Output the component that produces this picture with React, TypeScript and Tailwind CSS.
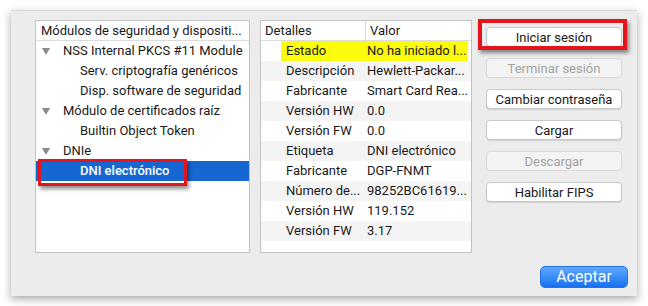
import React from "react";

const font = { fontFamily: "Roboto, 'Noto Sans', sans-serif" };

function Tri() {
  return (
    <svg width="8" height="7" viewBox="0 0 8 7" className="shrink-0">
      <polygon points="0,0 8,0 4,7" fill="#8a8a8a" />
    </svg>
  );
}

type TreeRow = { label: string; level: 0 | 1; selected?: boolean };
const tree: TreeRow[] = [
  { label: "NSS Internal PKCS #11 Module", level: 0 },
  { label: "Serv. criptografía genéricos", level: 1 },
  { label: "Disp. software de seguridad", level: 1 },
  { label: "Módulo de certificados raíz", level: 0 },
  { label: "Builtin Object Token", level: 1 },
  { label: "DNIe", level: 0 },
  { label: "DNI electrónico", level: 1, selected: true },
];

const details: [string, string][] = [
  ["Estado", "No ha iniciado l..."],
  ["Descripción", "Hewlett-Packar..."],
  ["Fabricante", "Smart Card Rea..."],
  ["Versión HW", "0.0"],
  ["Versión FW", "0.0"],
  ["Etiqueta", "DNI electrónico"],
  ["Fabricante", "DGP-FNMT"],
  ["Número de...", "98252BC61619..."],
  ["Versión HW", "119.152"],
  ["Versión FW", "3.17"],
];

function Btn({ label, disabled }: { label: string; disabled?: boolean }) {
  return (
    <div
      className={
        "h-[20px] w-[136px] rounded-[4px] border flex items-center justify-center text-[13px] leading-none whitespace-nowrap " +
        (disabled
          ? "bg-[#f3f3f3] border-[#d8d8d8] text-[#a3a3a3]"
          : "bg-white border-[#c8c8c8] text-[#1a1a1a] shadow-[0_1px_1px_rgba(0,0,0,0.12)]")
      }
    >
      {label}
    </div>
  );
}

export default function App() {
  return (
    <div className="w-[648px] h-[306px] bg-white pl-[11px] pt-[10px]" style={font}>
      <div className="relative w-[626px] h-[286px] bg-[#ececec] border-t border-[#dadada] shadow-[0_3px_8px_rgba(0,0,0,0.35)] flex flex-col">
        <div className="flex pl-[24px] pt-[9px]">
          {/* Left tree panel */}
          <div className="relative w-[215px] h-[233px] bg-white border border-[#c2c2c2] flex flex-col">
            <div className="h-[20px] shrink-0 border-b border-[#dcdcdc] flex items-center pl-[5px] text-[13px] text-[#1a1a1a] whitespace-nowrap">
              Módulos de seguridad y dispositi...
            </div>
            {tree.map((r, i) => (
              <div
                key={i}
                className={
                  "h-[20px] shrink-0 flex items-center text-[13px] whitespace-nowrap " +
                  (r.selected ? "bg-[#1767d3] text-white font-medium" : "text-[#1a1a1a]")
                }
              >
                {r.level === 0 ? (
                  <div className="flex items-center pl-[6px] gap-[13px]">
                    <Tri />
                    <span>{r.label}</span>
                  </div>
                ) : (
                  <span className="pl-[44px]">{r.label}</span>
                )}
              </div>
            ))}
            {/* red annotation */}
            <div className="absolute left-[2px] top-[138px] w-[149px] h-[27px] border-[3px] border-[#e3141b] shadow-[2px_3px_4px_rgba(0,0,0,0.45)]" />
          </div>

          {/* Details panel */}
          <div className="ml-[10px] w-[212px] h-[233px] bg-white border border-[#c2c2c2] flex flex-col overflow-hidden">
            <div className="h-[20px] shrink-0 border-b border-[#dcdcdc] flex items-center text-[13px] text-[#1a1a1a] whitespace-nowrap">
              <div className="w-[105px] pl-[4px] h-full flex items-center border-r border-[#dcdcdc]">Detalles</div>
              <div className="pl-[4px]">Valor</div>
            </div>
            {details.map(([k, v], i) => (
              <div
                key={i}
                className={
                  "h-[20px] shrink-0 flex items-center text-[13px] text-[#1a1a1a] whitespace-nowrap " +
                  (i % 2 === 1 ? "bg-[#f4f4f4]" : "bg-white")
                }
              >
                <div className="w-[20px] shrink-0 h-full" />
                <div
                  className={
                    "flex items-center h-full w-[187px] " + (i === 0 ? "bg-[#fbfb0d]" : "")
                  }
                >
                  <span className="w-[86px] pl-[5px] shrink-0">{k}</span>
                  <span>{v}</span>
                </div>
              </div>
            ))}
            <div className="flex-1 bg-white" />
          </div>

          {/* Buttons */}
          <div className="relative ml-[14px] pt-[7px] flex flex-col gap-[11px]">
            <Btn label="Iniciar sesión" />
            <Btn label="Terminar sesión" disabled />
            <Btn label="Cambiar contraseña" />
            <Btn label="Cargar" />
            <Btn label="Descargar" disabled />
            <Btn label="Habilitar FIPS" />
            <div className="absolute left-[-8px] top-[-1px] w-[149px] h-[31px] border-[4px] border-[#e3141b] shadow-[2px_3px_4px_rgba(0,0,0,0.45)]" />
          </div>
        </div>

        <div className="flex justify-end pr-[9px] mt-[13px]">
          <div className="w-[88px] h-[22px] rounded-[5px] bg-gradient-to-b from-[#5ea8fc] to-[#1670f3] border border-[#2474e8] text-white text-[16px] flex items-center justify-center">
            Aceptar
          </div>
        </div>
      </div>
    </div>
  );
}
